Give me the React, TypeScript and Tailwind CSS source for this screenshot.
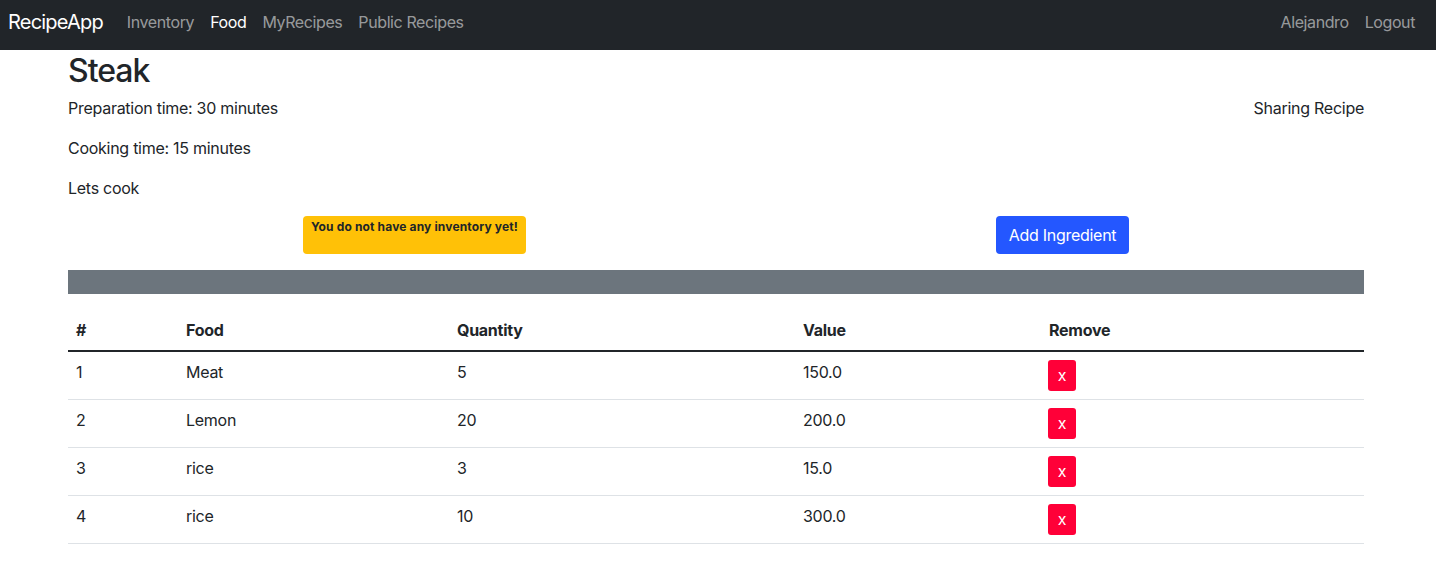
const rows = [
  { id: 1, food: "Meat", qty: "5", value: "150.0" },
  { id: 2, food: "Lemon", qty: "20", value: "200.0" },
  { id: 3, food: "rice", qty: "3", value: "15.0" },
  { id: 4, food: "rice", qty: "10", value: "300.0" },
];

export default function App() {
  return (
    <div className="min-h-[581px] bg-white text-[16px] leading-6 tracking-[-0.27px] text-[#212529] font-['Inter',sans-serif]">
      <nav className="flex h-[50px] items-center justify-between bg-[#212529] pb-[6px] pl-2 pr-[13px] tracking-[-0.4px]">
        <div className="flex items-center">
          <a className="mr-4 text-[20px] leading-[30px] tracking-[-0.8px] text-white">RecipeApp</a>
          <div className="flex">
            <a className="px-2 text-[#ffffff8c]">Inventory</a>
            <a className="px-2 text-white">Food</a>
            <a className="px-2 text-[#ffffff8c]">MyRecipes</a>
            <a className="px-2 text-[#ffffff8c]">Public Recipes</a>
          </div>
        </div>
        <div className="flex">
          <a className="px-2 text-[#ffffff8c]">Alejandro</a>
          <a className="px-2 text-[#ffffff8c]">Logout</a>
        </div>
      </nav>
      <main className="ml-[68px] w-[1296px]">
        <h2 className="mb-[6px] pt-[2px] text-[32px] leading-[38.4px] font-medium tracking-[-1px]">Steak</h2>
        <div className="flex justify-between">
          <p className="mb-4">Preparation time: 30 minutes</p>
          <p>Sharing Recipe</p>
        </div>
        <p className="mb-4">Cooking time: 15 minutes</p>
        <p className="mb-4">Lets cook</p>
        <div className="flex justify-around">
          <div className="w-[223px] whitespace-nowrap rounded bg-[#ffc107] px-2 pt-[2px] text-[12px] leading-[18px] font-bold tracking-[0.15px]">
            You do not have any inventory yet!
          </div>
          <button className="h-[38px] w-[133px] rounded-[4px] bg-[#2457ff] text-white">Add Ingredient</button>
        </div>
        <div className="mt-4 h-6 bg-[#6c757d]" />
        <table className="mt-4 w-full table-fixed border-collapse text-left">
          <colgroup>
            <col className="w-[110px]" />
            <col className="w-[271px]" />
            <col className="w-[346px]" />
            <col className="w-[245px]" />
            <col className="w-[324px]" />
          </colgroup>
          <thead>
            <tr className="border-b-2 border-[#212529]">
              <th className="p-2 font-bold">#</th>
              <th className="p-2 font-bold">Food</th>
              <th className="p-2 font-bold">Quantity</th>
              <th className="p-2 font-bold">Value</th>
              <th className="py-2 pl-[9px] pr-2 font-bold">Remove</th>
            </tr>
          </thead>
          <tbody>
            {rows.map((r) => (
              <tr key={r.id} className="border-b border-[#dee2e6]">
                <td className="p-2 align-top">{r.id}</td>
                <td className="p-2 align-top">{r.food}</td>
                <td className="p-2 align-top">{r.qty}</td>
                <td className="p-2 align-top">{r.value}</td>
                <td className="p-2 align-top">
                  <button className="block h-[31px] w-[28px] rounded-[3px] bg-[#ff0038] pb-[1px] text-[16px] leading-[24px] text-white">x</button>
                </td>
              </tr>
            ))}
          </tbody>
        </table>
      </main>
    </div>
  );
}
